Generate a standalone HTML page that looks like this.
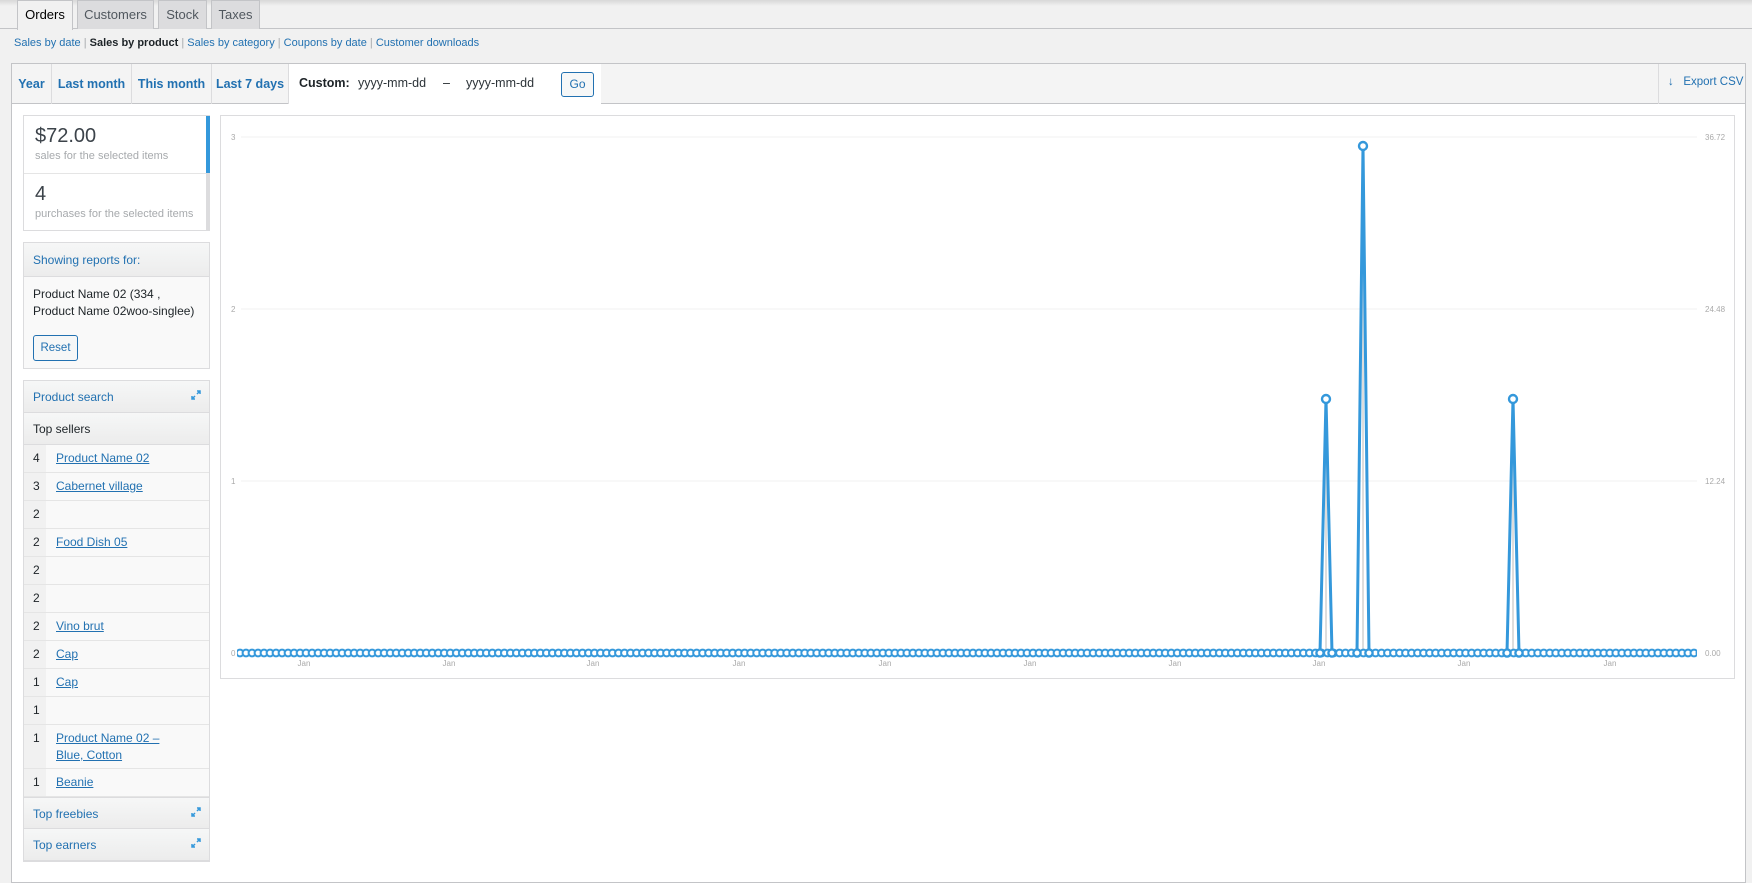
<!DOCTYPE html>
<html><head><meta charset="utf-8"><style>
*{box-sizing:border-box;margin:0;padding:0}
body{width:1752px;height:870px;overflow:hidden;background:#f1f1f1;font-family:"Liberation Sans",sans-serif;font-size:13px;color:#1d2327;position:relative}
a{color:#2271b1}
.abs{position:absolute}
.tab{position:absolute;top:0;height:29px;border:1px solid #c3c4c7;border-bottom:none;background:#dcdcde;font-size:13px;line-height:28px;text-align:center;color:#50575e}
.tab.act{background:#f1f1f1;color:#000;height:30px;z-index:2}
.sub{position:absolute;top:37px;left:14px;font-size:11px;color:#2271b1;white-space:nowrap}
.sub b{color:#1d2327;font-weight:bold}
.sub i{color:#a7aaad;font-style:normal}
.rng{position:absolute;top:64px;height:40px;line-height:40px;font-weight:bold;color:#2271b1;font-size:12.5px;text-align:center;border-right:1px solid #dcdcde}
.wid{position:absolute;left:23px;width:187px;border:1px solid #dcdcde;background:#f9f9f9}
.wh{height:32px;line-height:32px;padding-left:9px;color:#2271b1;font-size:12px;border-bottom:1px solid #dcdcde;background:linear-gradient(#f6f7f7,#ececec)}
.row{position:relative;height:28px;border-bottom:1px solid #e5e5e5;font-size:12px;line-height:27px}
.row .n{position:absolute;left:0;top:0;bottom:0;width:22px;padding-left:9px;background:#f1f1f1}
.row a{position:absolute;left:32px;top:0;text-decoration:underline}
.exp{position:absolute;right:8px;top:9px;width:10px;height:10px}
</style></head><body>
<div class="abs" style="left:0;top:0;width:1752px;height:6px;background:linear-gradient(#d8d8d8,#f1f1f1)"></div>
<div class="abs" style="left:0;top:28px;width:1752px;height:1px;background:#c3c4c7"></div>
<div class="tab act" style="left:17px;width:56px">Orders</div>
<div class="tab" style="left:77px;width:77px">Customers</div>
<div class="tab" style="left:158px;width:49px">Stock</div>
<div class="tab" style="left:211px;width:49px">Taxes</div>
<div class="sub">Sales by date <i>|</i> <b>Sales by product</b> <i>|</i> Sales by category <i>|</i> Coupons by date <i>|</i> Customer downloads</div>

<div class="abs" style="left:11px;top:63px;width:1735px;height:820px;border:1px solid #c3c4c7;background:#fff"></div>
<div class="abs" style="left:12px;top:64px;width:1733px;height:40px;background:#f4f4f4;border-bottom:1px solid #c3c4c7"></div>
<div class="rng" style="left:12px;width:40px">Year</div>
<div class="rng" style="left:52px;width:80px">Last month</div>
<div class="rng" style="left:132px;width:80px">This month</div>
<div class="rng" style="left:212px;width:77px">Last 7 days</div>
<div class="abs" style="left:289px;top:64px;width:312px;height:41px;background:#fff"></div>
<div class="abs" style="left:299px;top:76px;font-weight:bold;font-size:12.5px">Custom:</div>
<div class="abs" style="left:358px;top:76px;font-size:12.5px;color:#2c3338">yyyy-mm-dd</div>
<div class="abs" style="left:443px;top:76px;font-size:12.5px">–</div>
<div class="abs" style="left:466px;top:76px;font-size:12.5px;color:#2c3338">yyyy-mm-dd</div>
<div class="abs" style="left:561px;top:72px;width:33px;height:25px;border:1px solid #2271b1;border-radius:3px;color:#2271b1;font-size:12px;line-height:23px;text-align:center;background:#f6f7f7">Go</div>
<div class="abs" style="left:1658px;top:64px;width:1px;height:40px;background:#dcdcde"></div>
<div class="abs" style="left:1668px;top:76px;color:#2271b1;font-size:11.5px">↓&nbsp;&nbsp; Export CSV</div>

<!-- summary -->
<div class="abs" style="left:23px;top:115px;width:187px;height:116px;border:1px solid #dcdcde;background:#fff"></div>
<div class="abs" style="left:206px;top:116px;width:4px;height:57px;background:#3498db"></div>
<div class="abs" style="left:206px;top:173px;width:4px;height:57px;background:#dcdcde"></div>
<div class="abs" style="left:24px;top:173px;width:182px;height:1px;background:#e5e5e5"></div>
<div class="abs" style="left:35px;top:125px;font-size:20px;color:#3c434a">$72.00</div>
<div class="abs" style="left:35px;top:150px;font-size:11px;color:#a7aaad">sales for the selected items</div>
<div class="abs" style="left:35px;top:183px;font-size:20px;color:#3c434a">4</div>
<div class="abs" style="left:35px;top:208px;font-size:11px;color:#a7aaad">purchases for the selected items</div>

<div class="wid" style="top:242px;height:127px">
<div class="wh" style="height:34px;line-height:34px">Showing reports for:</div>
<div style="padding:9px 9px;font-size:12px;line-height:17px;color:#1d2327">Product Name 02 (334 , Product Name 02woo-singlee)</div>
<div style="position:absolute;left:9px;top:92px;width:45px;height:26px;border:1px solid #2271b1;border-radius:3px;color:#2271b1;font-size:11.5px;line-height:24px;text-align:center;background:#f6f7f7">Reset</div>
</div>

<div class="wid" style="top:380px;height:482px">
<div class="wh" style="position:relative">Product search<svg class="exp" viewBox="0 0 10 10"><path d="M6 1h3v3M9 1L6 4M4 9H1V6M1 9l3-3" stroke="#3498db" stroke-width="1.5" fill="none"/></svg></div>
<div class="wh" style="color:#1d2327;height:32px">Top sellers</div>
<div class="row"><span class="n">4</span><a>Product Name 02</a></div>
<div class="row"><span class="n">3</span><a>Cabernet village</a></div>
<div class="row"><span class="n">2</span></div>
<div class="row"><span class="n">2</span><a>Food Dish 05</a></div>
<div class="row"><span class="n">2</span></div>
<div class="row"><span class="n">2</span></div>
<div class="row"><span class="n">2</span><a>Vino brut</a></div>
<div class="row"><span class="n">2</span><a>Cap</a></div>
<div class="row"><span class="n">1</span><a>Cap</a></div>
<div class="row"><span class="n">1</span></div>
<div class="row" style="height:44px"><span class="n">1</span><a style="line-height:17px;top:5px">Product Name 02 –<br>Blue, Cotton</a></div>
<div class="row"><span class="n">1</span><a>Beanie</a></div>
<div class="wh" style="position:relative;border-top:1px solid #dcdcde">Top freebies<svg class="exp" viewBox="0 0 10 10"><path d="M6 1h3v3M9 1L6 4M4 9H1V6M1 9l3-3" stroke="#3498db" stroke-width="1.5" fill="none"/></svg></div>
<div class="wh" style="position:relative">Top earners<svg class="exp" viewBox="0 0 10 10"><path d="M6 1h3v3M9 1L6 4M4 9H1V6M1 9l3-3" stroke="#3498db" stroke-width="1.5" fill="none"/></svg></div>
</div>

<!-- chart -->
<div class="abs" style="left:220px;top:115px;width:1515px;height:564px;border:1px solid #dcdcde;background:#fff"></div>
<svg class="abs" style="left:0;top:0" width="1752" height="870">
<defs><pattern id="dots" x="237" y="647" width="6.008" height="12" patternUnits="userSpaceOnUse">
<g fill="#fff" stroke="#3498db" stroke-width="2"><circle cx="-3.004" cy="6" r="3.4"/><circle cx="3.004" cy="6" r="3.4"/><circle cx="9.012" cy="6" r="3.4"/></g></pattern></defs>
<g stroke="#f0f0f0" stroke-width="1"><line x1="241" y1="137" x2="1697" y2="137"/><line x1="241" y1="309" x2="1697" y2="309"/><line x1="241" y1="481" x2="1697" y2="481"/></g>
<g font-family="Liberation Sans" font-size="8" fill="#aaa"><text x="231" y="140">3</text><text x="231" y="312">2</text><text x="231" y="484">1</text><text x="231" y="656">0</text>
<text x="1705" y="140">36.72</text><text x="1705" y="312">24.48</text><text x="1705" y="484">12.24</text><text x="1705" y="656">0.00</text>
<g text-anchor="middle"><text x="304" y="666">Jan</text><text x="449" y="666">Jan</text><text x="593" y="666">Jan</text><text x="739" y="666">Jan</text><text x="885" y="666">Jan</text><text x="1030" y="666">Jan</text><text x="1175" y="666">Jan</text><text x="1319" y="666">Jan</text><text x="1464" y="666">Jan</text><text x="1610" y="666">Jan</text></g></g>
<g stroke="#ddd" stroke-width="2"><line x1="1326" y1="399" x2="1326" y2="653"/><line x1="1363" y1="146" x2="1363" y2="653"/><line x1="1513" y1="399" x2="1513" y2="653"/></g>
<rect x="237" y="647" width="1460" height="12" fill="url(#dots)"/>
<polyline points="1320,653 1326,399 1332,653" fill="none" stroke="#3498db" stroke-width="3"/>
<polyline points="1357,653 1363,146 1369,653" fill="none" stroke="#3498db" stroke-width="3"/>
<polyline points="1507,653 1513,399 1519,653" fill="none" stroke="#3498db" stroke-width="3"/>
<g fill="#fff" stroke="#3498db" stroke-width="2.4"><circle cx="1326" cy="399" r="4"/><circle cx="1363" cy="146" r="4"/><circle cx="1513" cy="399" r="4"/>
<circle cx="1320" cy="653" r="3.6"/><circle cx="1332" cy="653" r="3.6"/><circle cx="1357" cy="653" r="3.6"/><circle cx="1369" cy="653" r="3.6"/><circle cx="1507" cy="653" r="3.6"/><circle cx="1519" cy="653" r="3.6"/></g>
</svg>
</body></html>
